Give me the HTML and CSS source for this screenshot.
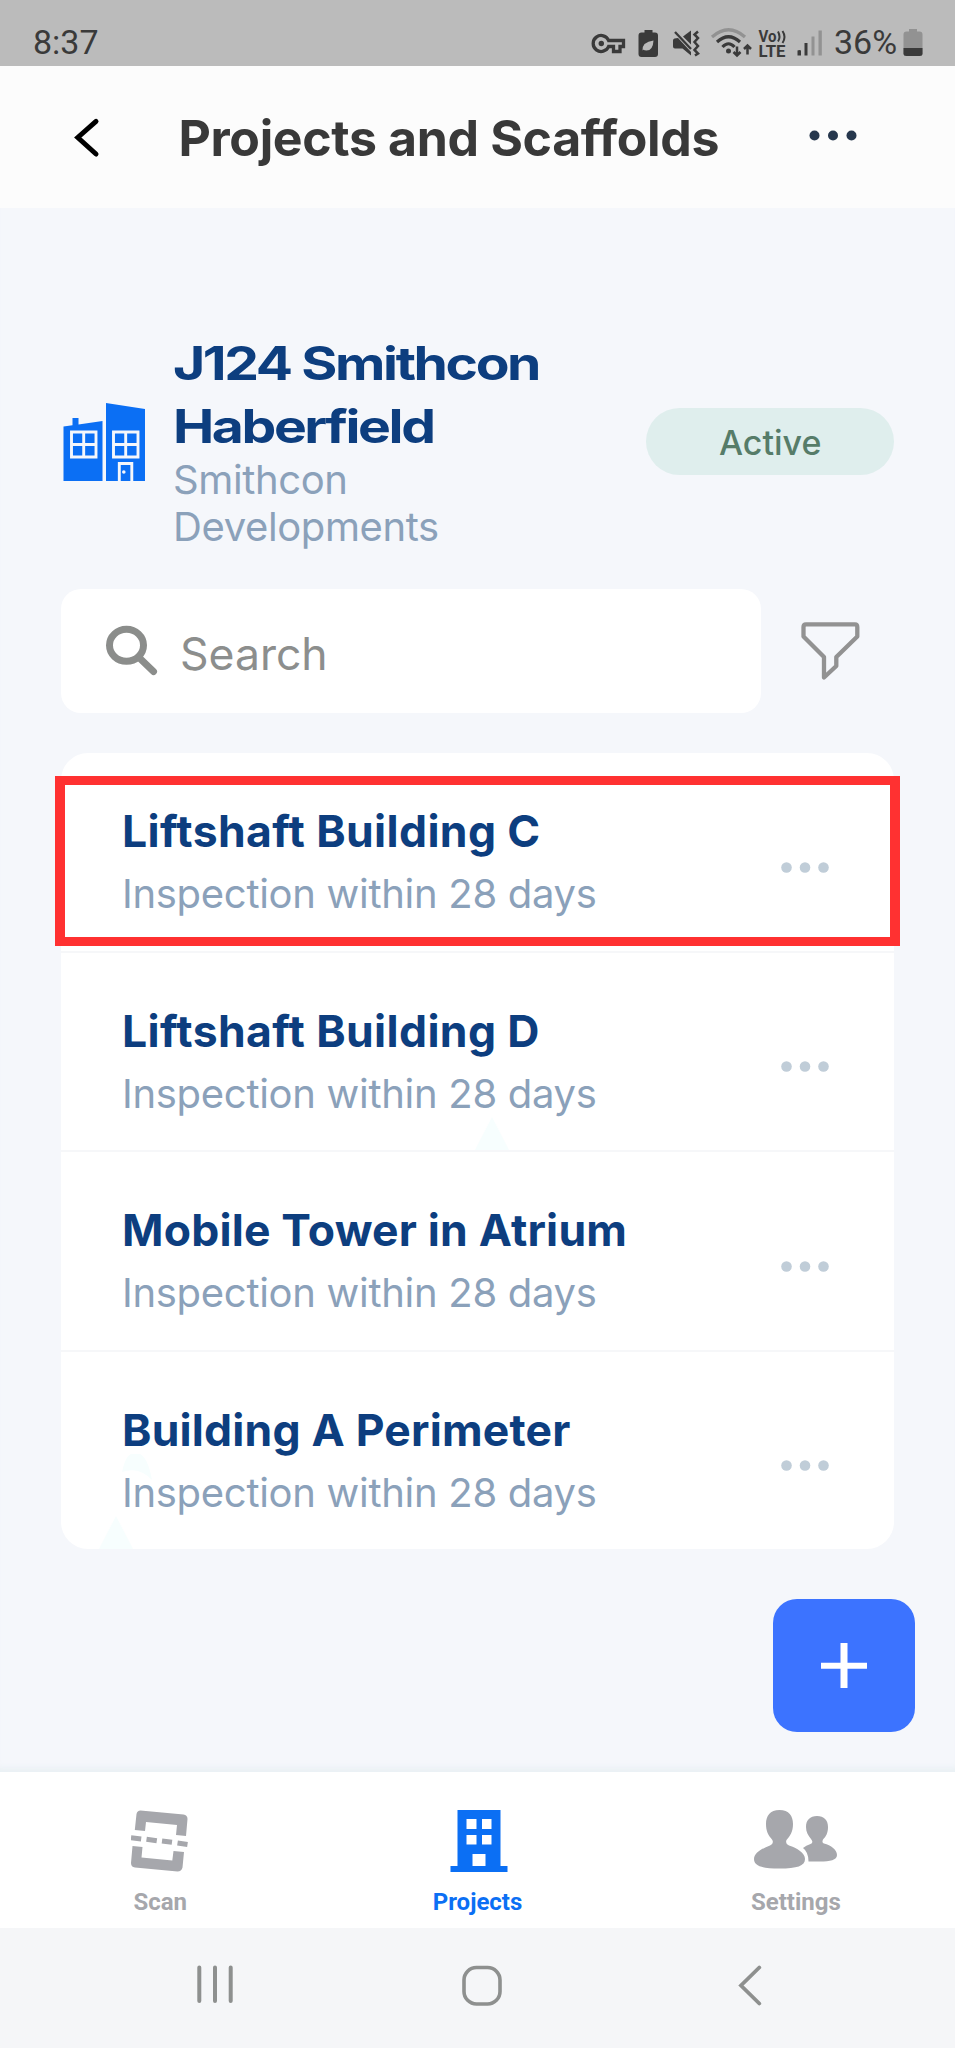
FILE: index.html
```html
<!DOCTYPE html>
<html lang="en">
<head>
<meta charset="utf-8">
<title>Projects and Scaffolds</title>
<link rel="stylesheet" href="styles.css">
</head>
<body>
<div class="screen">
  <div class="status-bar">
    <span class="clock">8:37</span>
    <svg class="status-icons" viewBox="590 24 236 38" fill="#3a3a3a">
      <g fill="none" stroke="#3a3a3a" stroke-width="3.300">
        <path d="M608.6 40.5A8 8 0 1 0 608.6 46.5H613.5V51.5H620V46.5H623.5V40.5Z"/>
      </g>
      <circle cx="601.3" cy="43.5" r="2.7"/>
      <path d="M644.5 30h8v2.5h2.500q3 0 3 3v18.500q0 3-3 3h-13.500q-3 0-3-3v-18.500q0-3 3-3h3z"/>
      <path d="M642.500 50.500q-.5-8.500 11-10q-.5 10-7 10q-2 0-3.500-1l5-4" fill="#bbb"/>
      <path d="M673 40.500q0-1.500 1.500-2l3.500-.5 13 14v3.500l-8.500-7h-7.500q-2 0-2-2z"/>
      <path d="M683 36.500l8-6v14z"/>
      <path d="M675 32l16 17" fill="none" stroke="#3a3a3a" stroke-width="2.300"/>
      <path d="M698 31.500l-3.500 3 3.500 3.500-3.500 4 3.500 4-3.500 4 3.500 3.500-3 2" fill="none" stroke="#3a3a3a" stroke-width="2.500"/>
      <g fill="none" stroke-width="3.200">
        <path d="M712 37Q728.500 22.500 745 37" stroke="#929292"/>
        <path d="M717 42Q728.500 31.500 740 42" stroke="#3a3a3a"/>
        <path d="M722.500 47Q728.500 40.500 734.500 47" stroke="#3a3a3a"/>
      </g>
      <circle cx="728.500" cy="51" r="2.500"/>
      <path d="M737 46.500v9M733.500 52l3.500 3.500 3.500-3.500M747.500 54.500v-9M744 49l3.500-3.500L751 49" fill="none" stroke="#3a3a3a" stroke-width="2.500"/>
      <text class="volte" x="758.500" y="41.500" textLength="18" lengthAdjust="spacingAndGlyphs">Vo</text>
      <path d="M778 31.500q3 5.500 0 10M782.500 31q4 6 0 12" fill="none" stroke="#3a3a3a" stroke-width="2"/>
      <text class="volte" x="758.500" y="56.500" textLength="27" lengthAdjust="spacingAndGlyphs">LTE</text>
      <path d="M797.500 50.500q2-1 3.500 0v5h-3.500zM804.500 43h3v12.500h-3z"/>
      <path d="M811.500 36.500h3v19h-3zM818.500 30.500h3.300v25h-3.300z" fill="#929292"/>
    </svg>
    <span class="charge">36%</span>
    <svg class="battery" viewBox="903 28 21 30">
      <path d="M909 29h8v2.500h2.500q3 0 3 3v19q0 2.500-3 2.500h-13q-3 0-3-2.500v-19q0-3 3-3h2.500z" fill="#929292"/>
      <path d="M903.500 48h19v5.500q0 2.500-3 2.500h-13q-3 0-3-2.500z" fill="#3a3a3a"/>
    </svg>
  </div>

  <header class="header">
    <svg class="back" viewBox="74 117 26 41"><path d="M96 121.300L77.800 137.500 96 154" fill="none" stroke="#000" stroke-width="5" stroke-linecap="round" stroke-linejoin="miter"/></svg>
    <h1 class="title">Projects and Scaffolds</h1>
    <svg class="dots dots-dark" viewBox="0 0 48 11"><circle cx="5.500" cy="5.500" r="5"/><circle cx="24" cy="5.500" r="5"/><circle cx="42.500" cy="5.500" r="5"/></svg>
  </header>

  <main class="content">
    <section class="project">
      <svg class="houses" viewBox="63 402 83 80" fill="#0b6ff4">
        <path d="M63.500 426.500l9-1.200V418h6v6.500l24-3.500v60h-39zM106 403l39 6v72h-39z"/>
        <g fill="#0b6ff4" stroke="#f5f7fb" stroke-width="2.900">
          <path d="M71.500 432h24.500v25h-24.500zM83.700 432v25M71.500 444.500h24.500M113.500 432H138v25h-24.500zM125.700 432v25M113.500 444.500H138"/>
          <path d="M119.300 481v-17.500h12.500v17.500"/>
        </g>
        <circle cx="123.800" cy="472" r="1.800" fill="#f5f7fb"/>
      </svg>
      <div class="project-text">
        <h2 class="project-name"><span class="line-a">J124 Smithcon</span><br><span class="line-b">Haberfield</span></h2>
        <p class="client">Smithcon<br>Developments</p>
      </div>
      <span class="pill">Active</span>
    </section>

    <div class="tools">
      <div class="search">
        <svg class="lens" viewBox="105 625 53 51" fill="none" stroke="#8b8d8b"><ellipse cx="126.500" cy="645.300" rx="17" ry="16" stroke-width="7"/><path d="M140 658.500L153.500 671.500" stroke-width="7" stroke-linecap="round"/></svg>
        <span class="search-text">Search</span>
      </div>
      <svg class="filter" viewBox="800 621 61 61"><path d="M806 624.300H855Q857.300 624.300 857.300 627V636.500L836.300 657V666L824 677.500V657L803.500 636.500V627Q803.500 624.300 806 624.300Z" fill="none" stroke="#929292" stroke-width="4.300" stroke-linejoin="round"/></svg>
    </div>

    <div class="list">
      <article class="item">
        <div><h3>Liftshaft Building C</h3><p>Inspection within 28 days</p></div>
        <svg class="dots" viewBox="0 0 48 11"><circle cx="5.500" cy="5.500" r="5.300"/><circle cx="24" cy="5.500" r="5.300"/><circle cx="42.500" cy="5.500" r="5.300"/></svg>
      </article>
      <article class="item">
        <div><h3>Liftshaft Building D</h3><p>Inspection within 28 days</p></div>
        <svg class="dots" viewBox="0 0 48 11"><circle cx="5.500" cy="5.500" r="5.300"/><circle cx="24" cy="5.500" r="5.300"/><circle cx="42.500" cy="5.500" r="5.300"/></svg>
        <svg class="peak peak-center" viewBox="0 0 34 33"><path d="M17 0L34 33H0z"/></svg>
      </article>
      <article class="item">
        <div><h3>Mobile Tower in Atrium</h3><p>Inspection within 28 days</p></div>
        <svg class="dots" viewBox="0 0 48 11"><circle cx="5.500" cy="5.500" r="5.300"/><circle cx="24" cy="5.500" r="5.300"/><circle cx="42.500" cy="5.500" r="5.300"/></svg>
      </article>
      <article class="item">
        <div><h3>Building A Perimeter</h3><p>Inspection within 28 days</p></div>
        <svg class="dots" viewBox="0 0 48 11"><circle cx="5.500" cy="5.500" r="5.300"/><circle cx="24" cy="5.500" r="5.300"/><circle cx="42.500" cy="5.500" r="5.300"/></svg>
        <svg class="peak peak-left" viewBox="0 0 34 33"><path d="M17 0L34 33H0z"/></svg>
        <svg class="arch" viewBox="0 0 30 26"><path d="M0 18Q4 0 10 0H18Q26 4 30 26Q17 12 0 18z"/></svg>
      </article>
      <div class="highlight"></div>
    </div>

    <div class="fab"><svg viewBox="0 0 46 46"><path d="M19.500 0h7v19.800H46v6H26.500V45h-7V25.800H0v-6h19.500z" fill="#fff"/></svg></div>
  </main>

  <nav class="tabs">
    <div class="tab tab-scan">
      <svg class="tab-icon" width="57" height="62" viewBox="131 1809.500 57 62" fill="#a6a7ac">
        <path d="M134.800 1829.500L136.500 1813.500Q137.200 1810 140.500 1810L183.500 1814Q187.500 1814.500 187.500 1818.500L186 1835.500L176 1834.500L177 1824.500L146 1821.500L145 1830.500Z"/>
        <path d="M132.500 1845.500L142.500 1846.500L141.500 1857L172.300 1860L173.500 1850.500L184 1851.500L182.500 1867Q181.500 1871 177.500 1871L135 1867Q131 1866.500 131 1862.500Z"/>
        <path d="M131 1837.300L141.200 1838.500M146.500 1838.800L156.800 1840.300M162 1840.500L172 1841.800M177.500 1842.500L187.500 1844" stroke="#a6a7ac" stroke-width="5"/>
      </svg>
      <span>Scan</span>
    </div>
    <div class="tab tab-active">
      <svg class="tab-icon" width="57" height="62" viewBox="449.500 1810 57 62" overflow="visible"><path d="M458 1810H501V1866H508V1872H451V1866H458ZM467 1819V1829H477V1819ZM482.500 1819V1829H492V1819ZM467 1835V1844.500H477V1835ZM482.500 1835V1844.500H492V1835ZM473 1854V1866H486V1854Z" fill="#0b6ff4" fill-rule="evenodd"/></svg>
      <span>Projects</span>
    </div>
    <div class="tab">
      <svg class="tab-icon" width="84" height="62" viewBox="754 1810 84 62" fill="#a6a7ac">
        <path d="M779.500 1810C789 1810 793 1816 793 1824C793 1832 790 1836 786.500 1840Q785 1844 789 1845.500C797 1848 805 1853 805 1859C805 1866 797 1868.500 779.500 1868.500C762 1868.500 754 1866 754 1859C754 1853 762 1848.500 770 1845.500Q774.500 1843.500 772 1839.500C768 1835 766 1831 766 1824C766 1816 770 1810 779.500 1810Z"/>
        <path d="M817 1816C824 1816 828 1820 828 1827C828 1833 826 1836.500 823 1839.500Q821.500 1842.500 824 1843.500C831 1845.500 837 1849.500 837 1855C837 1860 830 1861.500 820 1861.500H808.500Q808.500 1852 803 1848Q806 1845.500 810.500 1844Q814 1842.500 811 1839C808 1835 806 1832 806 1827C806 1820 810 1816 817 1816Z"/>
      </svg>
      <span>Settings</span>
    </div>
  </nav>

  <div class="system-nav">
    <svg viewBox="196 1966 38 39" width="38" height="39"><path d="M199.300 1968.500v33.500M215 1968.500v33.500M230.700 1968.500v33.500" stroke="#8e908f" stroke-width="4" stroke-linecap="round"/></svg>
    <svg class="home" viewBox="462 1965 40 41" width="40" height="41"><rect x="464" y="1967.500" width="36" height="36.500" rx="12.500" fill="none" stroke="#8e908f" stroke-width="3.600"/></svg>
    <svg class="return" viewBox="738 1965 24 41" width="24" height="41"><path d="M759.300 1967.500L741 1985.500L759.300 2003.500" fill="none" stroke="#8e908f" stroke-width="3.800" stroke-linecap="round"/></svg>
  </div>
</div>
</body>
</html>
```
FILE: styles.css
```css
* { box-sizing: border-box; }
body, h1, h2, h3, p { margin: 0; }
svg { display: block; flex: none; }

.screen {
  width: 955px;
  height: 2048px;
  display: flex;
  flex-direction: column;
  overflow: hidden;
  background: #f5f7fb;
  font-family: Inter, "Liberation Sans", sans-serif;
  white-space: nowrap;
}

.status-bar {
  height: 66px;
  flex: none;
  display: flex;
  padding: 24px 31px 0 33px;
  background: #bbb;
  color: #3a3a3a;
  font: 34px/36px Roboto, sans-serif;
}
.clock { width: 557px; }
.status-icons { width: 236px; height: 38px; }
.volte { font: bold 16.500px Roboto, sans-serif; }
.charge { width: 69px; margin-left: 8px; }
.battery { width: 21px; height: 30px; margin-top: 4px; }

.header {
  height: 142px;
  flex: none;
  display: flex;
  align-items: center;
  padding: 0 98px 0 74px;
  background: #fcfcfc;
}
.back { width: 26px; height: 41px; }
.title {
  width: 628px;
  margin-left: 78px;
  padding: 2px 0 0 0.500px;
  color: #393939;
  font-size: 50px;
  font-weight: 700;
  letter-spacing: -0.350px;
}
.dots { width: 48px; height: 11px; fill: #c0cdd8; }
.dots-dark { margin: -4px 0 0 2.500px; fill: #26374d; }

.content {
  flex: 1;
  padding: 123px 40px 0 61px;
  box-shadow: inset 0 -8px 6px -4px #e9f0f4;
}
.project {
  width: 833px;
  height: 220px;
  display: flex;
  align-items: center;
}
.houses { width: 83px; height: 80px; margin: 2px 0 0 2px; }
.project-text { width: 474px; margin-left: 27px; padding-top: 1px; }
.project-name {
  color: #0d3e7f;
  font-size: 46px;
  font-weight: 700;
  line-height: 62.500px;
}
.line-a, .line-b {
  display: inline-block;
  letter-spacing: -2px;
  transform: scaleX(1.200);
  transform-origin: left;
}
.client {
  color: #8ba1ba;
  font-size: 40px;
  font-weight: 400;
  letter-spacing: -0.380px;
  line-height: 46.800px;
}
.pill {
  width: 248px;
  height: 67px;
  border-radius: 34px;
  background: #dfeeed;
  color: #567c69;
  font-size: 34px;
  font-weight: 500;
  line-height: 69px;
  text-align: center;
}

.tools {
  display: flex;
  align-items: center;
  margin-top: 38px;
}
.search {
  width: 700px;
  height: 124px;
  display: flex;
  align-items: center;
  padding-left: 44px;
  border-radius: 20px;
  background: #fff;
}
.lens { width: 53px; height: 51px; margin-top: -2px; }
.search-text {
  margin-left: 22px;
  padding-top: 5px;
  color: #8c8e8d;
  font-size: 44.500px;
  font-weight: 400;
}
.filter { width: 61px; height: 61px; margin-left: 39px; }

.list {
  position: relative;
  width: 833px;
  height: 796px;
  margin-top: 40px;
  display: grid;
  grid-template-rows: repeat(3, 199.500px) 1fr;
  border-radius: 27px;
  background: #fff;
}
.item {
  position: relative;
  display: flex;
  justify-content: space-between;
  align-items: flex-start;
  padding: 47px 65px 0 61px;
  border-bottom: 2px solid #f6f7f9;
}
.item:nth-child(4) { border-bottom: 0; }
.item h3 {
  color: #0d3e7f;
  font-size: 44.500px;
  font-weight: 700;
  letter-spacing: 0.200px;
  line-height: 62px;
}
.item:nth-child(-n+2) h3 { letter-spacing: 0.380px; }
.item p {
  color: #8ba1ba;
  font-size: 40px;
  font-weight: 400;
  letter-spacing: -0.290px;
  line-height: 64px;
}
.item .dots { margin-top: 61.500px; }
.peak { position: absolute; bottom: 0; width: 34px; height: 33px; fill: #f7fefe; z-index: 0; }
.peak-center { left: 414px; }
.peak-left { left: 38px; }
.arch { position: absolute; left: 61px; top: 102px; width: 30px; height: 26px; fill: #f7fefe; }
.item div { position: relative; z-index: 1; }
.highlight {
  position: absolute;
  left: -6px;
  top: 23px;
  z-index: 2;
  width: 845px;
  height: 170px;
  border: solid #ff3131;
  border-width: 9.500px 10px;
}

.fab {
  width: 142px;
  height: 133px;
  margin: 50px 0 0 auto;
  display: grid;
  place-items: center;
  border-radius: 24px;
  background: #3c73ff;
}
.fab svg { width: 46px; height: 46px; }

.tabs {
  height: 156px;
  flex: none;
  display: grid;
  grid-template-columns: repeat(3, 1fr);
  background: #fff;
}
.tab {
  display: flex;
  flex-direction: column;
  align-items: center;
  padding-top: 38px;
  color: #a6a7ac;
  font: 700 24px/30px Roboto, sans-serif;
}
.tab span { margin-top: 15px; }
.tab-scan span { margin-left: 2px; }
.tab-active { color: #0b6ff4; }

.system-nav {
  height: 120px;
  flex: none;
  display: flex;
  padding: 37px 0 0 196px;
  background: #f5f6f8;
}
.home { margin-left: 228px; }
.return { margin-left: 236px; }
```
